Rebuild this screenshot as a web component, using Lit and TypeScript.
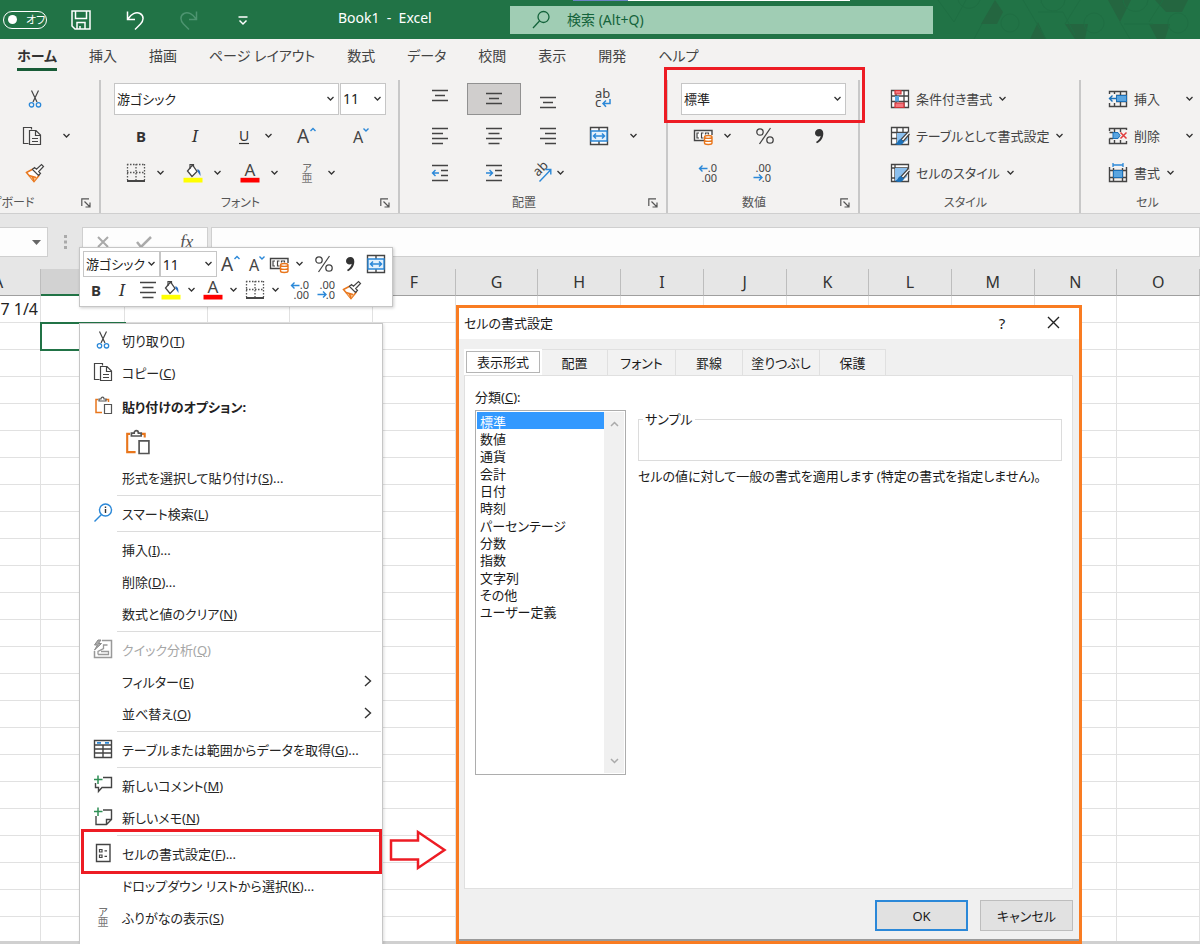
import { LitElement, html, svg, css, nothing, TemplateResult, SVGTemplateResult } from "lit";
import { customElement, property } from "lit/decorators.js";

const fontStack = css`"Noto Sans", "Noto Sans CJK JP", sans-serif`;

const shapes: Record<string, SVGTemplateResult> = {
  cut: svg`<path d="M6.5 1.5 12 13M13.5 1.5 8 13" stroke="#444" fill="none" stroke-width="1.2"/><circle cx="6.5" cy="15.8" r="2.2" fill="none" stroke="#2b88d8" stroke-width="1.3"/><circle cx="13.5" cy="15.8" r="2.2" fill="none" stroke="#2b88d8" stroke-width="1.3"/>`,
  copy: svg`<path d="M6.500 17.500H1.500V1.500H9.500V3.500M7.500 4.500H14L18.500 9V18.500H7.500ZM13.500 4.500V9.500H18.500M10 12.500H16M10 15.500H16" fill="none" stroke="#444" stroke-width="1.2"/>`,
  brush: svg`<path d="M1.500 9.500 8 6 14 12.500 9 18.500Z" fill="#fff" stroke="#e8761c" stroke-width="1.500"/><path d="M3.500 12 11.500 15 9 18.200Z" fill="#f9c08a"/><path d="M4 12.500 11 14.500 M9 18 7.500 14" stroke="#e8761c" stroke-width="1.400"/><path d="M7.500 6.500 9.500 4.500 11.500 6.200 16.500 1.500 18.500 3.500 13.700 8.500 15.500 10.500 13.500 12.500Z" fill="#fff" stroke="#444" stroke-width="1.200"/>`,
  bold: svg`<text x="10" y="15.500" text-anchor="middle" font-size="15" font-weight="700" fill="#333">B</text>`,
  italic: svg`<text x="10" y="15.500" text-anchor="middle" font-size="16" font-style="italic" font-family="Noto Serif, Liberation Serif, serif" fill="#333">I</text>`,
  underline: svg`<text x="10" y="14.500" text-anchor="middle" font-size="14" fill="#333">U</text><path d="M5 17.500H15" stroke="#333" stroke-width="1.200"/>`,
  grow: svg`<text x="7" y="16.500" text-anchor="middle" font-size="19" fill="#444">A</text><path d="M14.500 5 17 2.500 19.500 5" fill="none" stroke="#2b88d8" stroke-width="1.400"/>`,
  shrink: svg`<text x="8" y="17" text-anchor="middle" font-size="16" fill="#444">A</text><path d="M13.500 2.500 16 5 18.500 2.500" fill="none" stroke="#2b88d8" stroke-width="1.400"/>`,
  border: svg`<path d="M1.500 1V17M18.500 1V17M1 1.500H19M10 1V17M1 9.500H19" fill="none" stroke="#555" stroke-width="1.300" stroke-dasharray="1.500 1.500"/><path d="M1 18H19" stroke="#333" stroke-width="1.800"/>`,
  fill: svg`<path d="M9.500 2 4.500 8 9 13.500 14 8.500Z" fill="#fff" stroke="#444" stroke-width="1.300"/><path d="M7 6V1.500H10.500V4" fill="none" stroke="#444" stroke-width="1.200"/><path d="M14 6.500C16.500 6 17.500 8 17.500 13L14.800 9Z" fill="#2b6fc0"/><path d="M.5 14.800H19.500V19.500H.5Z" fill="#ff0"/>`,
  fontColor: svg`<text x="10" y="13" text-anchor="middle" font-size="17" fill="#444">A</text><path d="M.5 14.800H19.500V19.500H.5Z" fill="#f00"/>`,
  ruby: svg`<text x="10" y="8.500" text-anchor="middle" font-size="10" fill="#555">ア</text><text x="10" y="19" text-anchor="middle" font-size="11" fill="#777">亜</text>`,
  top: svg`<path d="M2 1.500H18M5 6.500H15M2 11.500H18" stroke="#444" stroke-width="1.400"/>`,
  middle: svg`<path d="M2 4.500H18M5 9.500H15M2 14.500H18" stroke="#444" stroke-width="1.400"/>`,
  bottom: svg`<path d="M2 8.500H18M5 13.500H15M2 18.500H18" stroke="#444" stroke-width="1.400"/>`,
  left: svg`<path d="M2 2.500H18M2 7.500H13M2 12.500H18M2 17.500H13" stroke="#444" stroke-width="1.400"/>`,
  center: svg`<path d="M2 2.500H18M4.500 7.500H15.500M2 12.500H18M4.500 17.500H15.500" stroke="#444" stroke-width="1.400"/>`,
  right: svg`<path d="M2 2.500H18M7 7.500H18M2 12.500H18M7 17.500H18" stroke="#444" stroke-width="1.400"/>`,
  outdent: svg`<path d="M2 2.500H18M11 7.500H18M11 12.500H18M2 17.500H18" stroke="#444" stroke-width="1.400"/><path d="M9 10H2.500M5.500 7 2.500 10 5.500 13" fill="none" stroke="#2b88d8" stroke-width="1.400"/>`,
  indent: svg`<path d="M2 2.500H18M11 7.500H18M11 12.500H18M2 17.500H18" stroke="#444" stroke-width="1.400"/><path d="M2 10H8.500M5.500 7 8.500 10 5.500 13" fill="none" stroke="#2b88d8" stroke-width="1.400"/>`,
  wrap: svg`<text x="3" y="9" font-size="13" fill="#444">ab</text><text x="3" y="18" font-size="13" fill="#444">c</text><path d="M18 10V14.500H11M14 11.500 11 14.500 14 17.800" fill="none" stroke="#2b88d8" stroke-width="1.500"/>`,
  merge: svg`<path d="M1.500 1.500H18.500V18.500H1.500ZM10 1.500V5M10 15V18.500" fill="#fff" stroke="#444" stroke-width="1.400"/><path d="M2 5H18V15H2Z" fill="#e5f1fb" stroke="#2b88d8" stroke-width="1.400"/><path d="M4.500 10H15.500M7 7.500 4.500 10 7 12.500M13 7.500 15.500 10 13 12.500" fill="none" stroke="#2b88d8" stroke-width="1.500"/>`,
  orient: svg`<text transform="translate(6 14) rotate(-45)" font-size="13" fill="#444">ab</text><path d="M7.500 18.500 18.500 7M13.500 6.500H18.800V11.500" fill="none" stroke="#2b88d8" stroke-width="1.400"/>`,
  currency: svg`<path d="M11 14.500H1.500V4.500H19V9" fill="#fff" stroke="#444" stroke-width="1.400"/><path d="M6 7H4V12H6M10.500 7H8.500V12H10.500M12.500 8.500V7H15.500V8.500" fill="none" stroke="#444" stroke-width="1.200"/><path d="M11.500 11C11.500 9 19 9 19 11V17C19 19 11.500 19 11.500 17ZM11.500 11C11.500 12.800 19 12.800 19 11M11.500 14C11.500 15.800 19 15.800 19 14" fill="#fff" stroke="#e8761c" stroke-width="1.400"/>`,
  percent: svg`<circle cx="5" cy="6" r="3.200" fill="none" stroke="#444" stroke-width="1.300"/><circle cx="15" cy="14" r="3.200" fill="none" stroke="#444" stroke-width="1.300"/><path d="M15.500 2 4.500 18" stroke="#444" stroke-width="1.300"/>`,
  comma: svg`<path d="M10.500 3C7.800 3 6 4.800 6 7S7.600 10.500 9.500 10.500C10.500 10.500 11.200 10.200 11.700 9.800 11.200 12.500 9.500 14.500 7 16L8 17.200C12 15.200 14.300 11.800 14.300 7.500 14.300 4.700 12.800 3 10.500 3Z" fill="#333"/>`,
  decUp: svg`<text x="19" y="9" text-anchor="end" font-size="11" fill="#444">.0</text><text x="19" y="19" text-anchor="end" font-size="11" fill="#444">.00</text><path d="M9.500 5.500H1.500M4.500 2.500 1.500 5.500 4.500 8.500" fill="none" stroke="#2b88d8" stroke-width="1.400"/>`,
  decDown: svg`<text x="19" y="9" text-anchor="end" font-size="11" fill="#444">.00</text><text x="19" y="19" text-anchor="end" font-size="11" fill="#444">.0</text><path d="M1.500 14.500H10M7 11.500 10 14.500 7 17.500" fill="none" stroke="#2b88d8" stroke-width="1.400"/>`,
  conditional: svg`<path d="M1.500 1.500H18.500V18.500H1.500ZM1.500 7H18.500M1.500 12.500H18.500M6 1.500V18.500M14 1.500V18.500" fill="#fff" stroke="#444" stroke-width="1.300"/><path d="M5 1.500H11V5H5ZM5 14H14V18.500H5Z" fill="#f4777f" stroke="#d13438" stroke-width="1.200"/><path d="M5 7H9V12.500H5Z" fill="#5aa5e0"/>`,
  tableStyle: svg`<path d="M1.500 1.500H18.500V18.500H1.500ZM1.500 6.500H18.500M1.500 12.500H8M7 1.500V18.500M13 1.500V7" fill="#fff" stroke="#444" stroke-width="1.300"/><path d="M7 7H18V14L12 18H7Z" fill="#8cc0ee"/><path d="M18.500 5.500 11 13.500 13 15.500 19.500 8" fill="#fff" stroke="#444" stroke-width="1.200"/><path d="M11 13C8 13 8.500 17 5 17.800 9 20 13.500 19 13.500 15.500Z" fill="#1b70b8"/>`,
  cellStyle: svg`<path d="M1.500 1.500H18.500V18.500H1.500ZM1.500 5H18.500M5 1.500V18.500M1.500 15H8" fill="#fff" stroke="#444" stroke-width="1.300"/><path d="M5 5H17V14L12 18H5Z" fill="#8cc0ee"/><path d="M18.500 5.500 11 13.500 13 15.500 19.500 8" fill="#fff" stroke="#444" stroke-width="1.200"/><path d="M11 13C8 13 8.500 17 5 17.800 9 20 13.500 19 13.500 15.500Z" fill="#1b70b8"/>`,
  insertCells: svg`<path d="M1.500 5V2.500H18.500V17.500H1.500V14M6.500 2.500V5M12.500 2.500V17.500M6.500 14V17.500M8 6.500H18.500M8 12.500H18.500" fill="none" stroke="#444" stroke-width="1.400"/><path d="M8.500 6.500H18.500V12.500H8.500Z" fill="#5aa5e0" stroke="#1b70b8"/><path d="M8 9.500H1.500M4.500 6.500 1.500 9.500 4.500 12.500" fill="none" stroke="#1b70b8" stroke-width="1.400"/>`,
  deleteCells: svg`<path d="M1.500 5V2.500H18.500V4M6.500 2.500V6M12.500 2.500V6M1.500 6.500H5M1.500 12.500H5M1.500 12.500V17.500H18.500V15M6.500 14V17.500M12.500 14V17.500" fill="none" stroke="#444" stroke-width="1.400"/><path d="M5 6.500H10L12 9.500 10 12.500H5Z" fill="#5aa5e0" stroke="#1b70b8"/><path d="M12.500 6.500 18.500 12.500M18.500 6.500 12.500 12.500" stroke="#e03c3c" stroke-width="1.500"/>`,
  formatCells: svg`<path d="M1.500 4V18.500H18.500V4M1.500 7.500H18.500M1.500 14.500H18.500M5.500 5V18.500M14.500 5V18.500" fill="none" stroke="#444" stroke-width="1.400"/><path d="M5.500 7.500H14.500V14.500H5.500Z" fill="#5aa5e0" stroke="#1b70b8"/><path d="M5 2H15M5 0V4M15 0V4" stroke="#2b88d8" stroke-width="1.300"/>`,
  paste: svg`<path d="M5 3.500H3V16.500H9M13 3.500H15.500V6" fill="none" stroke="#e8761c" stroke-width="1.500"/><path d="M6 5V3H8C8 .5 11 .5 11 3H13V5ZM11.500 8.500H18.500V17.500H11.500Z" fill="#fff" stroke="#555" stroke-width="1.200"/>`,
  smart: svg`<circle cx="12.500" cy="7" r="6" fill="#fff" stroke="#2b88d8" stroke-width="1.400"/><path d="M8.500 11.500 1.500 18.500" stroke="#2b88d8" stroke-width="1.500"/><path d="M12.500 6V10M12.500 3.500V5" stroke="#333" stroke-width="1.400"/>`,
  quick: svg`<path d="M9 1.500H18.500V18.500H1.500V12" fill="none" stroke="#999" stroke-width="1.500"/><path d="M5 15.500V12.500L10.500 9.500 10.500 6H14.500M5 15.500H15.500V12.500H8" fill="none" stroke="#999" stroke-width="1.300"/><path d="M5 1 1.500 6H4.500L1.500 11 8.500 4.500H5.500L8 1Z" fill="#aaa" stroke="#888"/>`,
  dataTable: svg`<path d="M1.500 1.500H18.500V18.500H1.500ZM1.500 6H18.500M1.500 10H18.500M1.500 14H18.500M10 6V18.500" fill="#fff" stroke="#444" stroke-width="1.400"/><path d="M4 3.800H8M12 3.800H16" stroke="#2b88d8" stroke-width="1.800"/>`,
  comment: svg`<path d="M10 2.500H18.500V12.500H9L5.500 16.500V12.500H2.500V8" fill="none" stroke="#444" stroke-width="1.400"/><path d="M5 .5V9M1 4.500H9.500" stroke="#2f8f55" stroke-width="1.500"/>`,
  memo: svg`<path d="M10 3H18.500V12.500L13.500 17.500H3V9M18.500 12.500H13.500V17.500" fill="none" stroke="#444" stroke-width="1.400"/><path d="M5 .5V9M1 4.500H9.500" stroke="#2f8f55" stroke-width="1.500"/>`,
  format: svg`<path d="M3.500 1.500H17V18.500H3.500Z" fill="#fff" stroke="#444" stroke-width="1.400"/><path d="M6.500 6.500H9V9H6.500ZM6.500 12H9V14.500H6.500ZM11.500 7.800H14M11.500 13.300H14" fill="none" stroke="#444" stroke-width="1.200"/>`,
  save: svg`<path d="M1 1H19V19H4L1 16ZM4.500 1V8.500H15.500V1M6 19V12.500H14V19M9 16V19" fill="none" stroke="#fff" stroke-width="1.500"/>`,
  undo: svg`<path d="M2.500 1.500V9.500H10M2.500 9.500C6 4 11 1.500 15 3.500 19.500 6 18.500 11 15.500 14L10 19.500" fill="none" stroke="#fff" stroke-width="1.500"/>`,
  redo: svg`<path d="M17.500 1.500V9.500H10M17.500 9.500C14 4 9 1.500 5 3.500 .5 6 1.500 11 4.500 14L10 19.500" fill="none" stroke="#4d9470" stroke-width="1.500"/>`,
  customize: svg`<path d="M5.500 7H14.500M6.500 10.500 10 14 13.500 10.500" fill="none" stroke="#fff" stroke-width="1.500"/>`,
  search: svg`<circle cx="12.500" cy="7" r="5.500" fill="none" stroke="#14633b" stroke-width="1.300"/><path d="M8.500 11 2 18" stroke="#14633b" stroke-width="1.300"/>`,
};

const icon = (name: string) =>
  html`<svg class="icon" width="20" height="20" viewBox="0 0 20 20" aria-hidden="true">${shapes[name]}</svg>`;

const chevron = html`<svg class="chev" width="9" height="6" viewBox="0 0 9 6" aria-hidden="true"><path d="M1.500 1 4.500 4 7.500 1" fill="none" stroke="#333" stroke-width="1.300"/></svg>`;

const launcher = html`<button class="launcher" aria-label="詳細"><svg width="10" height="10" viewBox="0 0 10 10"><path d="M.8 8V.8H8M3.500 3.500 9 9M9 4.500V9H4.500" fill="none" stroke="#555" stroke-width="1.200"/></svg></button>`;

const base = css`
  *, *::before { box-sizing: border-box; }
  button, select, input {
    font: inherit;
    font-feature-settings: inherit;
    color: inherit;
    margin: 0;
    padding: 0;
    border: 0;
    background: none;
    border-radius: 0;
    outline: 0;
  }
  svg { display: block; flex: none; overflow: visible; font-family: ${fontStack}; }
`;

const toolStyles = css`
  .tool {
    display: flex;
    flex: none;
    align-items: center;
    justify-content: center;
    height: 32px;
  }
  .w26 { width: 26px; height: 26px; }
  .w42 { width: 42px; height: 26px; justify-content: flex-start; }
  .w54 { width: 54px; }
  .w57 { width: 57px; justify-content: flex-end; padding-right: 6px; }
  .w76 { width: 76px; }
  .near { gap: 4px; }
  .mid { gap: 6px; }
  .far { gap: 10px; }
  .wide { gap: 20px; }
  .pick { display: grid; align-items: center; border: 1px solid #c6c6c6; background: #fff; font-feature-settings: "palt"; }
  .pick > * { grid-area: 1 / 1; }
  .pick select { appearance: none; width: 100%; height: 100%; padding-left: 2px; color: #222; }
  .pick .chev { justify-self: end; margin-right: 3px; pointer-events: none; }
`;

const tool = (name: string, label: string, size = "w54") =>
  html`<button class="tool ${size}" aria-label=${label}>${icon(name)}</button>`;
const split = (name: string, label: string, size = "w57", gap = "far") =>
  html`<button class="tool ${size} ${gap}" aria-label=${label}>${icon(name)}${chevron}</button>`;
const pick = (value: string, label: string, cls: string) =>
  html`<label class="pick ${cls}"><select aria-label=${label}><option>${value}</option></select>${chevron}</label>`;

@customElement("title-bar")
class TitleBar extends LitElement {
  static styles = [base, css`
    :host { display: block; background: #217346; color: #fff; }
    .bar { position: relative; display: flex; align-items: center; height: 39px; }
    .toggle {
      display: flex; align-items: center; gap: 9px; width: 44px; height: 18px; margin: 0 24px 0 3px;
      padding: 0 4px; border: 1px solid #fff; border-radius: 9px; font-size: 11px; line-height: 16px;
      font-feature-settings: "palt"; white-space: nowrap; flex: none;
    }
    .dot { width: 9px; height: 9px; border-radius: 5px; background: #fff; flex: none; }
    .quick { display: flex; gap: 34px; }
    .name { margin-left: 85px; width: 172px; font-size: 14px; white-space: pre; line-height: 20px; padding-bottom: 3px; }
    .search { display: flex; align-items: center; gap: 16px; width: 423px; height: 28px; padding-left: 21px; background: #a0cdb4; color: #14633b; }
    input { flex: 1; font-size: 14px; }
    input::placeholder { color: #14633b; opacity: 1; }
    .art { flex: 1; align-self: stretch; overflow: hidden; }
    .edge { position: absolute; top: 0; left: 573px; width: 277px; height: 1px; background: linear-gradient(90deg, #6b83c4 55px, #fff 55px); }
  `];
  render() {
    return html`<header class="bar">
      <button class="toggle" role="switch" aria-checked="false"><span class="dot"></span>オフ</button>
      <div class="quick">
        <button aria-label="保存">${icon("save")}</button>
        <button aria-label="元に戻す">${icon("undo")}</button>
        <button aria-label="やり直し">${icon("redo")}</button>
        <button aria-label="カスタマイズ">${icon("customize")}</button>
      </div>
      <span class="name">Book1  -  Excel</span>
      <label class="search">${icon("search")}<input placeholder="検索 (Alt+Q)" aria-label="検索"></label>
      <div class="art"><svg width="267" height="39" viewBox="0 0 267 39" aria-hidden="true">
        <path d="M62 0 70 12 64 24H48ZM105 22 113 39H97ZM132 24H155L152 39H142ZM175 0H198L187 22ZM222 0H255L249 12H233ZM216 24H237L232 39H224Z" fill="#246640"/>
        <g fill="none" stroke="#1f6e43"><circle cx="77" cy="23" r="9"/><circle cx="161" cy="23" r="10"/><circle cx="245" cy="23" r="10"/>
        <path d="M25 -6A11 11 0 0 0 47 0M108 -2A12 12 0 0 0 132 0M190 -2A12 12 0 0 0 215 0M5 0 21 22 33 0M90 0 113 39M105 12H130L142 35M41 39 49 24M132 24 147 0M187 22 197 39M191 24H220M216 22 230 0"/></g></svg></div>
      <span class="edge"></span>
    </header>`;
  }
}

@customElement("ribbon-group")
class RibbonGroup extends LitElement {
  @property() label = "";
  @property({ type: Boolean }) launch = false;
  static styles = [base, css`
    :host { display: flex; flex-direction: column; }
    .foot { display: flex; align-items: center; height: 22px; padding: 2px 8px 0 0; }
    .label { flex: 1; text-align: center; font-size: 12px; color: #555; font-feature-settings: "palt"; white-space: nowrap; line-height: 20px; }
    .launcher { width: 10px; height: 10px; }
  `];
  render() {
    return html`<slot></slot><div class="foot"><span class="label">${this.label}</span>${this.launch ? launcher : nothing}</div>`;
  }
}

@customElement("ribbon-bar")
class RibbonBar extends LitElement {
  static styles = [base, toolStyles, css`
    :host { display: block; background: #f3f2f1; color: #444; border-bottom: 1px solid #cfcfcf; }
    nav { display: flex; gap: 32px; height: 41px; padding: 4px 0 0 17px; font-size: 14px; font-feature-settings: "palt"; }
    nav a { color: #444; text-decoration: none; line-height: 26px; height: 28px; white-space: nowrap; }
    nav a.on { font-weight: 700; color: #333; border-bottom: 3px solid #185c37; }
    .groups { display: flex; align-items: stretch; overflow: hidden; }
    ribbon-group { flex: none; border-right: 2px solid #c8c8c8; height: 133px; }
    .clip { width: 101px; overflow: hidden; display: flex; justify-content: flex-end; flex: none; }
    .clip ribbon-group { width: 187px; }
    .font { width: 299px; }
    .align { width: 268px; }
    .num { width: 192px; }
    .style { width: 221px; }
    ribbon-group.cells { flex: 1 0 141px; border-right: 0; }
    .rows { display: grid; grid-template-rows: repeat(3, 37px); align-items: center; }
    .row { display: flex; align-items: center; }
    .clip .rows { padding-left: 94px; }
    .font .rows, .align .rows, .num .rows { padding-left: 13px; }
    .pick { height: 32px; font-size: 13px; }
    .fontname { width: 225px; }
    .size { width: 46px; margin-left: 1px; font-size: 14px; }
    .format { width: 165px; }
    .on-tool { background: #d0cecd; border: 1px solid #919191; }
    .style .rows { padding-left: 30px; }
    .cells .rows { padding-left: 27px; }
    .cmd { display: flex; align-items: center; gap: 6px; height: 32px; font-size: 13px; font-feature-settings: "palt"; white-space: nowrap; }
    .cmd.spread { width: 86px; }
    .spread .chev { margin-left: auto; }
  `];
  render() {
    const tabs = ["ホーム", "挿入", "描画", "ページ レイアウト", "数式", "データ", "校閲", "表示", "開発", "ヘルプ"];
    const cmd = (name: string, label: string, cls = "") =>
      html`<button class="cmd ${cls}">${icon(name)}<span>${label}</span>${chevron}</button>`;
    return html`
      <nav>${tabs.map((t, i) => html`<a href="#" class=${i ? "" : "on"}>${t}</a>`)}</nav>
      <div class="groups">
        <div class="clip"><ribbon-group label="クリップボード" launch><div class="rows">
          <div class="row">${tool("cut", "切り取り")}</div>
          <div class="row">${split("copy", "コピー", "w76", "wide")}</div>
          <div class="row">${tool("brush", "書式のコピー")}</div>
        </div></ribbon-group></div>
        <ribbon-group class="font" label="フォント" launch><div class="rows">
          <div class="row">${pick("游ゴシック", "フォント名", "fontname")}${pick("11", "サイズ", "size")}</div>
          <div class="row">${tool("bold", "太字")}${tool("italic", "斜体")}${split("underline", "下線")}${tool("grow", "拡大")}${tool("shrink", "縮小")}</div>
          <div class="row">${split("border", "罫線")}${split("fill", "塗りつぶし")}${split("fontColor", "文字色")}${split("ruby", "ふりがな")}</div>
        </div></ribbon-group>
        <ribbon-group class="align" label="配置" launch><div class="rows">
          <div class="row">${tool("top", "上揃え")}${tool("middle", "上下中央", "w54 on-tool")}${tool("bottom", "下揃え")}${tool("wrap", "折り返し")}</div>
          <div class="row">${tool("left", "左揃え")}${tool("center", "中央揃え")}${tool("right", "右揃え")}${split("merge", "セルを結合", "w76", "wide")}</div>
          <div class="row">${tool("outdent", "インデントを減らす")}${tool("indent", "インデントを増やす")}${split("orient", "方向", "w54", "near")}</div>
        </div></ribbon-group>
        <ribbon-group class="num" label="数値" launch><div class="rows">
          <div class="row">${pick("標準", "表示形式", "format")}</div>
          <div class="row">${split("currency", "通貨")}${tool("percent", "パーセント")}${tool("comma", "桁区切り")}</div>
          <div class="row">${tool("decUp", "小数点以下を増やす")}${tool("decDown", "小数点以下を減らす")}</div>
        </div></ribbon-group>
        <ribbon-group class="style" label="スタイル"><div class="rows">
          ${cmd("conditional", "条件付き書式")}${cmd("tableStyle", "テーブルとして書式設定")}${cmd("cellStyle", "セルのスタイル")}
        </div></ribbon-group>
        <ribbon-group class="cells" label="セル"><div class="rows">
          ${cmd("insertCells", "挿入", "spread")}${cmd("deleteCells", "削除", "spread")}${cmd("formatCells", "書式")}
        </div></ribbon-group>
      </div>`;
  }
}

@customElement("sheet-grid")
class SheetGrid extends LitElement {
  static styles = [base, css`
    :host { display: block; background: #e6e6e6; color: #333; }
    .formula { display: flex; height: 30px; margin-top: 13px; }
    .formula > * { background: #fdfdfd; border: 1px solid #cfcfcf; }
    .where { width: 48px; border-left: 0; display: flex; align-items: center; justify-content: flex-end; padding-right: 6px; }
    .formula .dots { width: 34px; background: none; border: 0; display: grid; place-items: center; }
    .fx { display: flex; align-items: center; justify-content: space-around; width: 126px; font: italic 18px/24px "Liberation Serif", serif; color: #555; }
    .formula input { flex: 1; margin-left: 3px; }
    table { width: 100%; margin-top: 12px; table-layout: fixed; border-spacing: 0; background: #fff; }
    .first { width: 41px; }
    .second { width: 84px; }
    th { height: 27px; padding: 0; font-weight: 400; font-size: 16px; line-height: 24px; background: #e6e6e6; border-right: 1px solid #bdbdbd; border-bottom: 1px solid #9f9f9f; }
    th.sel { background: #d2d2d2; border-bottom: 2px solid #217346; }
    td { height: 27px; padding: 0; border-right: 1px solid #e1e1e1; border-bottom: 1px solid #e1e1e1; font-size: 16px; line-height: 24px; white-space: nowrap; }
    .clip { display: flex; justify-content: flex-end; overflow: hidden; }
    .clip span { width: 84px; flex: none; text-align: center; }
    .clip .val { text-align: right; padding-right: 2px; color: #222; }
    td.cell { outline: 2px solid #217346; outline-offset: -1px; }
  `];
  render() {
    const cols = ["A", "", "", "", "", "F", "G", "H", "I", "J", "K", "L", "M", "N", "O"];
    const rows = Array.from({ length: 24 }, (_, i) => i);
    return html`
      <div class="formula">
        <div class="where"><svg width="9" height="5"><path d="M0 0H9L4.500 5Z" fill="#666"/></svg></div>
        <div class="dots"><svg width="3" height="14"><path d="M0 0H3V3H0ZM0 5.500H3V8.500H0ZM0 11H3V14H0Z" fill="#aaa"/></svg></div>
        <div class="fx">
          <svg width="12" height="10"><path d="M1 0 11 10M11 0 1 10" stroke="#aaa" stroke-width="2"/></svg>
          <svg width="16" height="12"><path d="M1 6 5 11 15 1" fill="none" stroke="#aaa" stroke-width="2.500"/></svg>
          <span>fx</span>
        </div>
        <input aria-label="数式バー">
      </div>
      <table>
        <colgroup><col class="first"><col class="second">${cols.slice(2).map(() => html`<col>`)}</colgroup>
        <thead><tr>${cols.map((c, i) => html`<th class=${i === 1 ? "sel" : ""}>${i ? c : html`<div class="clip"><span>${c}</span></div>`}</th>`)}</tr></thead>
        <tbody>${rows.map((r) => html`<tr>${cols.map((_, c) => html`<td class=${r === 1 && c === 1 ? "cell" : ""}>${r === 0 && c === 0 ? html`<div class="clip"><span class="val">7 1/4</span></div>` : nothing}</td>`)}</tr>`)}</tbody>
      </table>`;
  }
}

@customElement("mini-toolbar")
class MiniToolbar extends LitElement {
  static styles = [base, toolStyles, css`
    :host { display: block; background: #fff; border: 1px solid #c6c6c6; box-shadow: 1px 1px 3px #0003; padding: 3px; color: #333; }
    .row { display: flex; align-items: center; height: 26px; }
    .pick { height: 26px; font-size: 13px; }
    .name { width: 78px; }
    .size { width: 58px; font-size: 14px; }
  `];
  render() {
    return html`
      <div class="row">${pick("游ゴシック", "フォント名", "name")}${pick("11", "サイズ", "size")}
        ${tool("grow", "拡大", "w26")}${tool("shrink", "縮小", "w26")}${split("currency", "通貨", "w42", "mid")}${tool("percent", "パーセント", "w26")}${tool("comma", "桁区切り", "w26")}${tool("merge", "セルを結合", "w26")}</div>
      <div class="row">${tool("bold", "太字", "w26")}${tool("italic", "斜体", "w26")}${tool("center", "中央揃え", "w26")}${split("fill", "塗りつぶし", "w42", "mid")}${split("fontColor", "文字色", "w42", "mid")}${split("border", "罫線", "w42", "mid")}${tool("decUp", "小数点以下を増やす", "w26")}${tool("decDown", "小数点以下を減らす", "w26")}${tool("brush", "書式のコピー", "w26")}</div>`;
  }
}

interface Entry { text?: string; key?: string; tail?: string; icon?: string; kind?: "sep" | "head" | "options" | "off" | "sub"; }

@customElement("context-menu")
class ContextMenu extends LitElement {
  static styles = [base, css`
    :host { display: block; background: #fff; border: 1px solid #c6c6c6; box-shadow: 1px 1px 3px #0002; padding: 0 1px; color: #262626; font-size: 13px; font-feature-settings: "palt"; }
    .item { display: grid; grid-template-columns: 41px 1fr auto; align-items: center; width: 100%; height: 32px; text-align: left; white-space: nowrap; padding-right: 9px; }
    .item .icon { grid-column: 1; margin-left: 12px; }
    .item span { grid-column: 2; }
    .head { height: 36px; font-weight: 700; color: #222; }
    .off { color: #a6a6a6; }
    .options { display: flex; align-items: center; height: 37px; padding-left: 42px; }
    hr { height: 4px; margin: 0 0 0 36px; border: 0; background: linear-gradient(#fff 2px, #dcdcdc 2px, #dcdcdc 3px, #fff 3px); }
    .options svg { width: 28px; height: 28px; }
  `];
  render() {
    const sep: Entry = { kind: "sep" };
    const entries: Entry[] = [
      { text: "切り取り", key: "T", icon: "cut" },
      { text: "コピー", key: "C", icon: "copy" },
      { text: "貼り付けのオプション:", icon: "paste", kind: "head" },
      { kind: "options" },
      { text: "形式を選択して貼り付け", key: "S", tail: "..." }, sep,
      { text: "スマート検索", key: "L", icon: "smart" }, sep,
      { text: "挿入", key: "I", tail: "..." },
      { text: "削除", key: "D", tail: "..." },
      { text: "数式と値のクリア", key: "N" }, sep,
      { text: "クイック分析", key: "Q", icon: "quick", kind: "off" },
      { text: "フィルター", key: "E", kind: "sub" },
      { text: "並べ替え", key: "O", kind: "sub" }, sep,
      { text: "テーブルまたは範囲からデータを取得", key: "G", tail: "...", icon: "dataTable" }, sep,
      { text: "新しいコメント", key: "M", icon: "comment" },
      { text: "新しいメモ", key: "N", icon: "memo" }, sep,
      { text: "セルの書式設定", key: "F", tail: "...", icon: "format" },
      { text: "ドロップダウン リストから選択", key: "K", tail: "..." },
      { text: "ふりがなの表示", key: "S", icon: "ruby" },
      { text: "名前の定義", key: "A", tail: "..." },
    ];
    return entries.map((e): TemplateResult => {
      if (e.kind === "sep") return html`<hr>`;
      if (e.kind === "options") return html`<div class="options"><button aria-label="貼り付け">${icon("paste")}</button></div>`;
      return html`<button class="item ${e.kind ?? ""}" ?disabled=${e.kind === "off"}>${e.icon ? icon(e.icon) : nothing}<span>${e.text}${e.key ? html`(<u>${e.key}</u>)${e.tail ?? ""}` : nothing}</span>${e.kind === "sub" ? html`<svg width="8" height="12"><path d="M1 1 6.500 6 1 11" fill="none" stroke="#333" stroke-width="1.400"/></svg>` : nothing}</button>`;
    });
  }
}

@customElement("format-dialog")
class FormatDialog extends LitElement {
  static styles = [base, css`
    :host { display: block; background: #f0f0f0; border: 3px solid #f97c22; color: #1a1a1a; font-size: 13px; line-height: 20px; font-feature-settings: "palt"; }
    .head { display: flex; align-items: center; height: 31px; background: #fff; padding: 0 18px 2px 5px; }
    .head h1 { flex: 1; margin: 0; font-size: 13px; font-weight: 400; }
    .head button { width: 14px; height: 20px; }
    .head .help { margin-right: 38px; font-size: 15px; }
    .tabs { display: flex; align-items: flex-end; padding: 10px 0 0 5px; }
    .tabs button { height: 26px; background: #f2f2f2; border: 1px solid #e0e0e0; border-width: 1px 1px 0 0; }
    .tabs .on { width: 78px; background: #fff; border: 2px solid #fff; outline: 1px solid #b5b5b5; outline-offset: -3px; }
    .t1 { width: 66px; } .t2 { width: 68px; } .t3 { width: 67px; } .t4 { width: 77px; } .t5 { width: 66px; }
    .panel { display: grid; grid-template-columns: 151px minmax(0, 1fr); grid-template-rows: 25px 365px; gap: 0 12px; align-items: start; min-height: 514px; margin: 0 6px 0 5px; padding: 9px 10px; background: #fff; border: 1px solid #e0e0e0; }
    .panel label { grid-column: 1; line-height: 24px; }
    .list { grid-column: 1; display: flex; height: 365px; border: 1px solid #adadad; padding: 1px; }
    .list select { flex: 1; height: 100%; overflow: hidden; appearance: none; }
    option { height: 17px; min-height: 17px; padding: 0 3px; line-height: 17px; font-size: 13px; color: #1a1a1a; }
    option:nth-child(3n) { height: 18px; }
    option:checked { background: linear-gradient(#3399ff, #3399ff); color: #fff; }
    .scroll { display: flex; flex-direction: column; justify-content: space-between; align-items: center; width: 20px; padding: 9px 0; background: #f0f0f0; }
    fieldset { height: 51px; margin: 0; padding: 0; min-width: 0; border: 1px solid #dcdcdc; }
    legend { padding: 0 2px; margin-left: 4px; line-height: 18px; }
    .sample { grid-column: 2; }
    .sample p { margin: 5px 0 0; white-space: nowrap; }
    .actions { display: flex; justify-content: flex-end; gap: 12px; padding: 11px 6px 8px; }
    .actions button { width: 93px; height: 31px; background: #e1e1e1; border: 1px solid #bdbdbd; }
    .actions .ok { border: 2px solid #2b88d8; }
    .rim { border-top: 2px solid #9a9a9a; }
  `];
  render() {
    const kinds = ["標準", "数値", "通貨", "会計", "日付", "時刻", "パーセンテージ", "分数", "指数", "文字列", "その他", "ユーザー定義"];
    const tabs = ["表示形式", "配置", "フォント", "罫線", "塗りつぶし", "保護"];
    const arrow = (d: string) => html`<svg width="9" height="6"><path d=${d} fill="none" stroke="#aaa" stroke-width="1.500"/></svg>`;
    return html`
      <div class="head"><h1>セルの書式設定</h1><button class="help" aria-label="ヘルプ">?</button><button aria-label="閉じる"><svg width="13" height="13"><path d="M1 1 12 12M12 1 1 12" stroke="#222" stroke-width="1.400"/></svg></button></div>
      <div class="tabs">${tabs.map((t, i) => html`<button class=${i ? "t" + i : "on"}>${t}</button>`)}</div>
      <div class="panel">
        <label for="kind">分類(<u>C</u>):</label>
        <div class="list">
          <select id="kind" size="12">${kinds.map((k, i) => html`<option ?selected=${i === 0}>${k}</option>`)}</select>
          <div class="scroll">${arrow("M1 5 4.500 1.500 8 5")}${arrow("M1 1 4.500 4.500 8 1")}</div>
        </div>
        <div class="sample"><fieldset><legend>サンプル</legend></fieldset><p>セルの値に対して一般の書式を適用します (特定の書式を指定しません)。</p></div>
      </div>
      <div class="actions"><button class="ok">OK</button><button>キャンセル</button></div>
      <div class="rim"></div>`;
  }
}

@customElement("app-root")
class AppRoot extends LitElement {
  static styles = [base, css`
    :host { display: flex; flex-direction: column; position: relative; height: 100vh; overflow: hidden; font-family: ${fontStack}; background: #e6e6e6; }
    title-bar, ribbon-bar { flex: none; }
    sheet-grid { flex: 1; min-height: 0; overflow: hidden; }
    .foot { flex: none; height: 3px; background: #d0d0d0; }
    mini-toolbar { position: absolute; left: 79px; top: 247px; width: 314px; }
    context-menu { position: absolute; left: 79px; top: 323px; width: 304px; }
    format-dialog { position: absolute; left: 456px; top: 305px; width: 626px; }
    .mark { position: absolute; pointer-events: none; }
    .mark-format { left: 664px; top: 67px; width: 201px; height: 56px; border: 3px solid #ed1c24; }
    .mark-item { left: 81px; top: 829px; width: 301px; height: 45px; border: 3px solid #ed1c24; }
    .mark-arrow { left: 388px; top: 828px; }
  `];
  render() {
    return html`
      <title-bar></title-bar>
      <ribbon-bar></ribbon-bar>
      <sheet-grid></sheet-grid>
      <div class="foot"></div>
      <mini-toolbar></mini-toolbar>
      <context-menu></context-menu>
      <format-dialog></format-dialog>
      <div class="mark mark-format"></div>
      <div class="mark mark-item"></div>
      <svg class="mark mark-arrow" width="60" height="44"><path d="M3 12.500H30V4L56.500 22 30 40V31.500H3Z" fill="#fff" stroke="#ed1c24" stroke-width="2.500"/></svg>`;
  }
}
